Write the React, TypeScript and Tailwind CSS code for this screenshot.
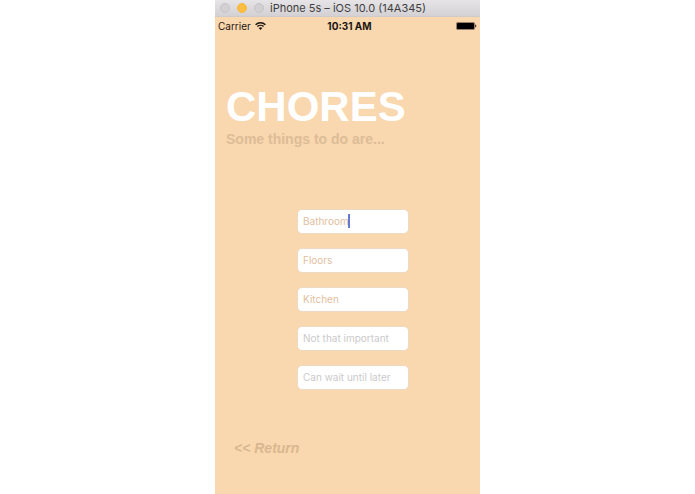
import { useState } from "react";

const chores = [
  { label: "First chore", value: "Bathroom", placeholder: "", active: true },
  { label: "Second chore", value: "Floors", placeholder: "", active: false },
  { label: "Third chore", value: "Kitchen", placeholder: "", active: false },
  { label: "Minor chore", value: "", placeholder: "Not that important", active: false },
  { label: "Later chore", value: "", placeholder: "Can wait until later", active: false },
];

function TitleBar() {
  return (
    <header className="relative flex h-[17px] items-center justify-center border-b border-[#cfcbca] bg-linear-to-b from-[#e6e4e6] to-[#d3d1d3]">
      <div className="absolute left-[5px] flex gap-[7px]">
        <button aria-label="Close" className="size-[10px] rounded-full border border-[#c6c4c6] bg-[#d2d0d2]" />
        <button aria-label="Minimize" className="size-[10px] rounded-full border border-[#f5b840] bg-[#fdbd3f]" />
        <button aria-label="Zoom" className="size-[10px] rounded-full border border-[#c6c4c6] bg-[#d2d0d2]" />
      </div>
      <h2 className="pl-px text-[11px] leading-4 text-[#3f3e40]">iPhone 5s – iOS 10.0 (14A345)</h2>
    </header>
  );
}

function StatusBar() {
  return (
    <div className="grid grid-cols-3 items-center px-[3px] text-[10px] leading-[18px] text-[#1c1611]">
      <div className="flex items-center gap-1">
        <span>Carrier</span>
        <svg viewBox="0 0 22 16" className="h-2 w-[11px]" fill="none" stroke="currentColor" strokeWidth="2.8">
          <path d="M1.2 5.4a14 14 0 0 1 19.6 0" />
          <path d="M4.8 9.2a9 9 0 0 1 12.4 0" />
          <path d="M11 15.8 7.4 12.1a5.2 5.2 0 0 1 7.2 0z" fill="currentColor" stroke="none" />
        </svg>
      </div>
      <time className="pl-1 text-center font-bold whitespace-nowrap">10:31 AM</time>
      <svg viewBox="0 0 21 8" className="h-2 w-[21px] justify-self-end">
        <rect x="0.4" y="0.4" width="18.2" height="7.2" rx="1.4" fill="none" stroke="#1c1611" strokeWidth="0.5" />
        <rect x="1" y="1" width="17" height="6" rx="0.8" fill="#000" />
        <path d="M19.3 2.6c1.4.4 1.4 2.4 0 2.8z" fill="#000" />
      </svg>
    </div>
  );
}

function ChoreField({ label, value, placeholder, active }: (typeof chores)[number]) {
  const [text, setText] = useState(value);
  return (
    <div className="relative">
      <input
        aria-label={label}
        value={text}
        placeholder={placeholder}
        onChange={(e) => setText(e.target.value)}
        className="block h-[25px] w-full rounded-[5px] border border-[#ecdac2] bg-white px-[5px] pb-[2px] text-[10px] text-[#dfc0a0] outline-none placeholder:text-[#cbcacb]"
      />
      {active && <span className="absolute top-[5px] left-[51px] h-[14px] w-[2px] bg-[#6479d6]" />}
    </div>
  );
}

export default function App() {
  return (
    <div className="flex min-h-screen justify-center bg-white font-['Inter',sans-serif]">
      <div className="flex w-full max-w-[265px] flex-col bg-[#f9d7af]">
        <TitleBar />
        <StatusBar />
        <main className="flex flex-col px-[11px] pt-12 font-['Liberation_Sans',sans-serif]">
          <h1 className="text-[42px] leading-[48px] font-bold text-white">CHORES</h1>
          <p className="text-[14px] leading-4 font-bold text-[#dcbd97]">Some things to do are...</p>
          <form className="mt-[62px] ml-[71px] flex w-[112px] flex-col gap-[14px] font-['Inter',sans-serif]">
            {chores.map((chore) => (
              <ChoreField key={chore.label} {...chore} />
            ))}
          </form>
          <a href="#home" className="mt-12 ml-2 self-start text-[14px] leading-5 font-bold text-[#d9b88f] italic">
            &lt;&lt; Return
          </a>
        </main>
      </div>
    </div>
  );
}
